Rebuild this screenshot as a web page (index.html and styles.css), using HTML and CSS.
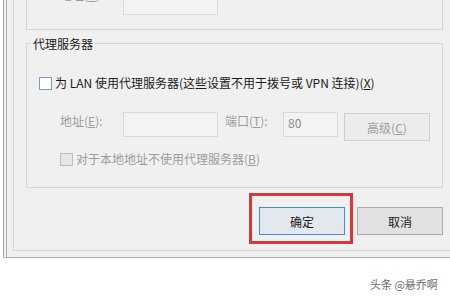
FILE: index.html
```html
<!DOCTYPE html>
<html lang="zh-CN">
<head>
<meta charset="utf-8">
<link rel="stylesheet" href="styles.css">
</head>
<body>
<div class="window">
  <div class="panel">
    <div class="group-top">
      <div class="top-row">
        <span class="label dis lbl-addr lbl-top">地址(<u>R</u>):</span>
        <span class="input in-addr in-top"></span>
      </div>
    </div>
    <fieldset class="group">
      <legend class="legend">代理服务器</legend>
      <div class="row row-lan">
        <span class="check"></span>
        <span class="text">为 LAN 使用代理服务器(这些设置不用于拨号或 VPN 连接)(<u>X</u>)</span>
      </div>
      <div class="row row-addr">
        <span class="label dis lbl-addr">地址(<u>E</u>):</span>
        <span class="input in-addr"></span>
        <span class="label dis lbl-port">端口(<u>T</u>):</span>
        <span class="input in-port">80</span>
        <span class="btn btn-dis">高级(<u>C</u>)</span>
      </div>
      <div class="row row-local">
        <span class="check check-dis"></span>
        <span class="text dis">对于本地地址不使用代理服务器(<u>B</u>)</span>
      </div>
    </fieldset>
    <div class="actions">
      <div class="btn-wrap">
        <span class="btn btn-default">确定</span>
        <span class="highlight"></span>
      </div>
      <span class="btn">取消</span>
    </div>
  </div>
</div>
<div class="watermark">头条 @悬乔啊</div>
</body>
</html>
```

FILE: styles.css
```css
html, body {
  margin: 0;
  padding: 0;
  background: #ffffff;
  width: 450px;
  height: 300px;
  overflow: hidden;
  font-family: "Noto Sans CJK SC", "Noto Sans", sans-serif;
  font-size: 12px;
  color: #1a1a1a;
}

u { text-decoration: underline; text-underline-offset: 1px; }

.window {
  margin-left: 3px;
  width: 437px;
  background: #f0f0f0;
  border-left: 4px double #a9a9a9;
  border-bottom: 1px solid #adadad;
  padding: 0 0 6px 6px;
}

.panel {
  background: #f0f0f0;
  border-left: 1px solid #d6d6d6;
  border-bottom: 1px solid #d6d6d6;
  padding: 0 0 15px 0;
}

.group-top {
  margin-left: 12px;
  width: 417px;
  height: 30px;
  box-sizing: border-box;
  border: 1px solid #d6d6d6;
  border-top: none;
  overflow: hidden;
}

.top-row {
  display: flex;
  align-items: flex-start;
  padding-left: 33px;
}

.lbl-top { margin-top: -14px; }
.in-top { margin-top: -10px; }

.group {
  margin: 7px 0 0 12px;
  width: 417px;
  box-sizing: border-box;
  border: 1px solid #d6d6d6;
  padding: 0 0 19px 4px;
  min-inline-size: 0;
}

.legend {
  padding: 0 2px;
  line-height: 13px;
  height: 13px;
  font-size: 12px;
  color: #1a1a1a;
}

.row {
  display: flex;
  align-items: center;
}

.row-lan {
  margin-top: 23px;
  height: 20px;
  padding-left: 8px;
}

.row-addr {
  margin-top: 19px;
  align-items: flex-start;
  padding-left: 29px;
}

.row-local {
  margin-top: 9px;
  height: 18px;
  padding-left: 29px;
}

.check {
  width: 13px;
  height: 13px;
  box-sizing: border-box;
  border: 1px solid #6f9fd0;
  background: #ffffff;
  flex: none;
}

.check-dis {
  border-color: #bcbcbc;
  background: #e6e6e6;
}

.text {
  margin-left: 3px;
  white-space: nowrap;
  line-height: 18px;
}

.dis { color: #9d9d9d; }

.label {
  line-height: 18px;
  white-space: nowrap;
  flex: none;
}

.lbl-addr { width: 63px; }

.lbl-port {
  width: 58px;
  margin-left: 7px;
}

.input {
  display: block;
  height: 25px;
  box-sizing: border-box;
  border: 1px solid #d9d9d9;
  background: #f3f3f3;
  flex: none;
  color: #8a8a8a;
  line-height: 20px;
  padding-left: 4px;
}

.in-addr { width: 95px; }
.in-port { width: 55px; }

.btn {
  display: flex;
  align-items: center;
  justify-content: center;
  width: 86px;
  height: 28px;
  box-sizing: border-box;
  border: 1px solid #adadad;
  background: #e1e1e1;
  color: #1a1a1a;
  flex: none;
}

.btn-dis {
  margin: 1px 0 0 6px;
  border-color: #cfcfcf;
  background: #ececec;
  color: #9d9d9d;
}

.btn-default {
  border-color: #3c8ee0;
  background: #e3e8ee;
}

.actions {
  display: flex;
  justify-content: flex-start;
  gap: 12px;
  margin-top: 19px;
  padding-left: 245px;
}

.btn-wrap {
  position: relative;
}

.highlight {
  position: absolute;
  left: -10px;
  top: -14px;
  width: 104px;
  height: 51px;
  box-sizing: border-box;
  border: 3px solid #d7363a;
}

.watermark {
  margin-top: 18px;
  padding-left: 370px;
  font-size: 11px;
  line-height: 16px;
  color: #6a6a6a;
  white-space: nowrap;
}
```
